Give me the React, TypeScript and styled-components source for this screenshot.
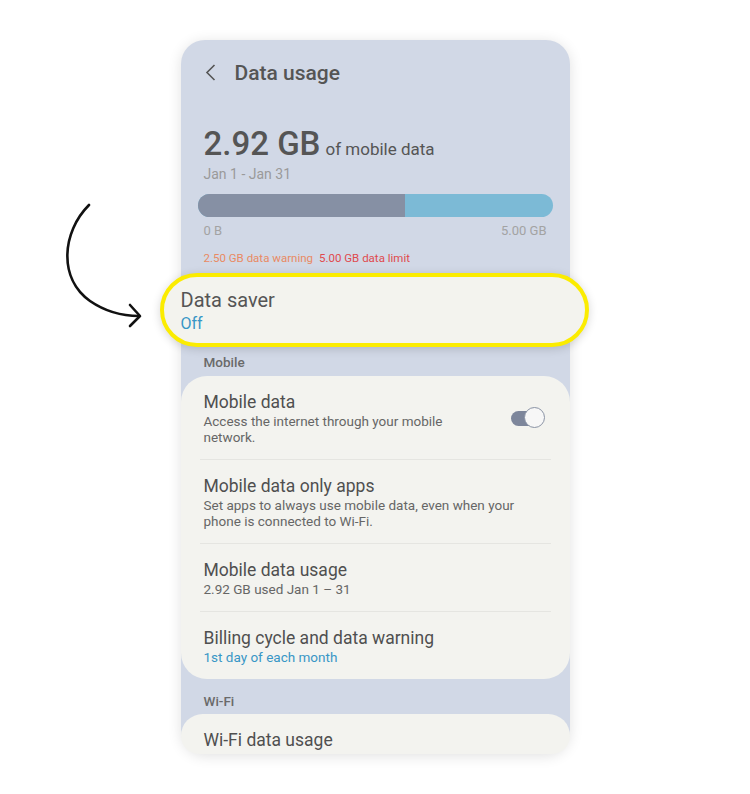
import styled, { createGlobalStyle } from "styled-components"

const GlobalStyle = createGlobalStyle`
  html, body {
    margin: 0;
    padding: 0;
    background: #ffffff;
    font-family: Roboto, "Liberation Sans", Arial, sans-serif;
  }
`

const Page = styled.div`
  position: relative;
  width: 750px;
  height: 794px;
  padding-top: 40px;
  box-sizing: border-box;
  display: flex;
  justify-content: center;
  align-items: flex-start;
  overflow: hidden;
`

const Phone = styled.div`
  width: 389px;
  height: 714px;
  background: #d1d8e6;
  border-radius: 24px;
  box-shadow: 0 2px 14px rgba(0, 0, 0, 0.12);
  display: flex;
  flex-direction: column;
`

const Header = styled.div`
  height: 65px;
  display: flex;
  align-items: center;
  padding-left: 24px;
  gap: 19px;
  color: #555;
`

const Title = styled.h1`
  margin: 0;
  font-size: 21px;
  line-height: 28px;
  font-weight: 500;
  color: #555555;
`

const Summary = styled.div`
  padding: 19px 23px 0 23px;
  display: flex;
  flex-direction: column;
`

const AmountRow = styled.div`
  display: flex;
  align-items: baseline;
  gap: 5px;
  color: #555555;
`

const Amount = styled.span`
  font-size: 33px;
  line-height: 40px;
  font-weight: 500;
`

const AmountUnit = styled.span`
  font-size: 17px;
  line-height: 22px;
`

const Period = styled.div`
  margin-top: 1px;
  font-size: 14px;
  line-height: 18px;
  color: #9a9a9a;
`

const Bar = styled.div`
  margin: 11px -6px 0 -6px;
  height: 23px;
  border-radius: 12px;
  overflow: hidden;
  display: flex;
  background: #7cbad6;
`

const BarUsed = styled.div`
  background: #8690a4;
  height: 100%;
`

const Scale = styled.div`
  margin-top: 6px;
  display: flex;
  justify-content: space-between;
  font-size: 13px;
  line-height: 16px;
  color: #a3a3a3;
`

const Limits = styled.div`
  margin-top: 12px;
  display: flex;
  gap: 6px;
  font-size: 11.5px;
  line-height: 14px;
`

const Limit = styled.span<{ $tone: "warn" | "limit" }>`
  color: ${(p) => (p.$tone === "warn" ? "#e98a63" : "#e04a4e")};
`

const SaverPill = styled.div`
  margin: 8px -19px 0 -21px;
  border: 4px solid #fbec00;
  border-radius: 40px;
  background: #f3f3ee;
  padding: 10px 17px 9px 17px;
  box-shadow: 0 2px 10px rgba(0, 0, 0, 0.16);
`

const SaverTitle = styled.div`
  font-size: 20px;
  line-height: 26px;
  color: #555555;
`

const BlueText = styled.div<{ $size: number }>`
  font-size: ${(p) => p.$size}px;
  line-height: ${(p) => (p.$size > 14 ? 20 : 16)}px;
  margin-top: ${(p) => (p.$size > 14 ? 1 : 0)}px;
  color: #3896c6;
`

const SectionLabel = styled.div<{ $top: number; $bottom: number }>`
  padding: 0 23px;
  margin: ${(p) => p.$top}px 0 ${(p) => p.$bottom}px 0;
  font-size: 13.5px;
  line-height: 16px;
  font-weight: 500;
  color: #6a6a6a;
`

const Card = styled.div`
  background: #f3f3ef;
  border-radius: 26px;
  display: flex;
  flex-direction: column;
`

const ClippedCard = styled(Card)`
  flex: 1;
  border-radius: 26px 26px 22px 22px;
  overflow: hidden;
`

const Item = styled.div`
  display: flex;
  align-items: center;
  padding: 15px 25px 14px 23px;
`

const ItemText = styled.div<{ $narrow?: boolean }>`
  flex: 1;
  max-width: ${(p) => (p.$narrow ? "256px" : "none")};
  display: flex;
  flex-direction: column;
`

const ItemTitle = styled.div`
  font-size: 17.5px;
  line-height: 22px;
  color: #4f4f4f;
`

const ItemDesc = styled.div`
  font-size: 13.5px;
  line-height: 16px;
  color: #666666;
`

const Divider = styled.div`
  height: 1px;
  margin: 0 19px;
  background: #e5e5e1;
`

const Toggle = styled.div`
  margin-left: auto;
  position: relative;
  width: 34px;
  height: 22px;
  flex: none;
`

const Track = styled.div`
  position: absolute;
  left: 0;
  top: 4px;
  width: 31px;
  height: 15px;
  border-radius: 8px;
  background: #7d869b;
`

const Knob = styled.div`
  position: absolute;
  right: 0;
  top: 0;
  width: 19px;
  height: 19px;
  border-radius: 50%;
  background: #f7f7f7;
  border: 1.5px solid #8a93a5;
`

const Arrow = styled.svg`
  position: absolute;
  left: 55px;
  top: 195px;
  overflow: visible;
`

const Back = () => (
  <svg width="11" height="17" viewBox="0 0 11 17" fill="none">
    <path d="M9.5 1 L2 8.5 L9.5 16" stroke="#555" strokeWidth="1.6" />
  </svg>
)

export default function App() {
  return (
    <>
      <GlobalStyle />
      <Page>
        <Phone>
          <Header>
            <Back />
            <Title>Data usage</Title>
          </Header>
          <Summary>
            <AmountRow>
              <Amount>2.92 GB</Amount>
              <AmountUnit>of mobile data</AmountUnit>
            </AmountRow>
            <Period>Jan 1 - Jan 31</Period>
            <Bar>
              <BarUsed style={{ width: `${(2.92 / 5) * 100}%` }} />
            </Bar>
            <Scale>
              <span>0 B</span>
              <span>5.00 GB</span>
            </Scale>
            <Limits>
              <Limit $tone="warn">2.50 GB data warning</Limit>
              <Limit $tone="limit">5.00 GB data limit</Limit>
            </Limits>
          </Summary>
          <SaverPill>
            <SaverTitle>Data saver</SaverTitle>
            <BlueText $size={16}>Off</BlueText>
          </SaverPill>
          <SectionLabel $top={7} $bottom={6}>Mobile</SectionLabel>
          <Card>
            <Item>
              <ItemText $narrow>
                <ItemTitle>Mobile data</ItemTitle>
                <ItemDesc>Access the internet through your mobile network.</ItemDesc>
              </ItemText>
              <Toggle>
                <Track />
                <Knob />
              </Toggle>
            </Item>
            <Divider />
            <Item>
              <ItemText>
                <ItemTitle>Mobile data only apps</ItemTitle>
                <ItemDesc>
                  Set apps to always use mobile data, even when your phone is connected to Wi-Fi.
                </ItemDesc>
              </ItemText>
            </Item>
            <Divider />
            <Item>
              <ItemText>
                <ItemTitle>Mobile data usage</ItemTitle>
                <ItemDesc>2.92 GB used Jan 1 – 31</ItemDesc>
              </ItemText>
            </Item>
            <Divider />
            <Item>
              <ItemText>
                <ItemTitle>Billing cycle and data warning</ItemTitle>
                <BlueText $size={13.5}>1st day of each month</BlueText>
              </ItemText>
            </Item>
          </Card>
          <SectionLabel $top={14} $bottom={5}>Wi-Fi</SectionLabel>
          <ClippedCard>
            <Item>
              <ItemText>
                <ItemTitle>Wi-Fi data usage</ItemTitle>
              </ItemText>
            </Item>
          </ClippedCard>
        </Phone>
        <Arrow width="100" height="140" viewBox="55 195 100 140">
          <path
            d="M89 205 C62 232 58 278 90 301 C106 312 122 316 139 316"
            stroke="#111"
            strokeWidth="2.6"
            fill="none"
            strokeLinecap="round"
          />
          <path
            d="M130 305 L140 316 L130 326"
            stroke="#111"
            strokeWidth="2.6"
            fill="none"
            strokeLinecap="round"
            strokeLinejoin="round"
          />
        </Arrow>
      </Page>
    </>
  )
}
